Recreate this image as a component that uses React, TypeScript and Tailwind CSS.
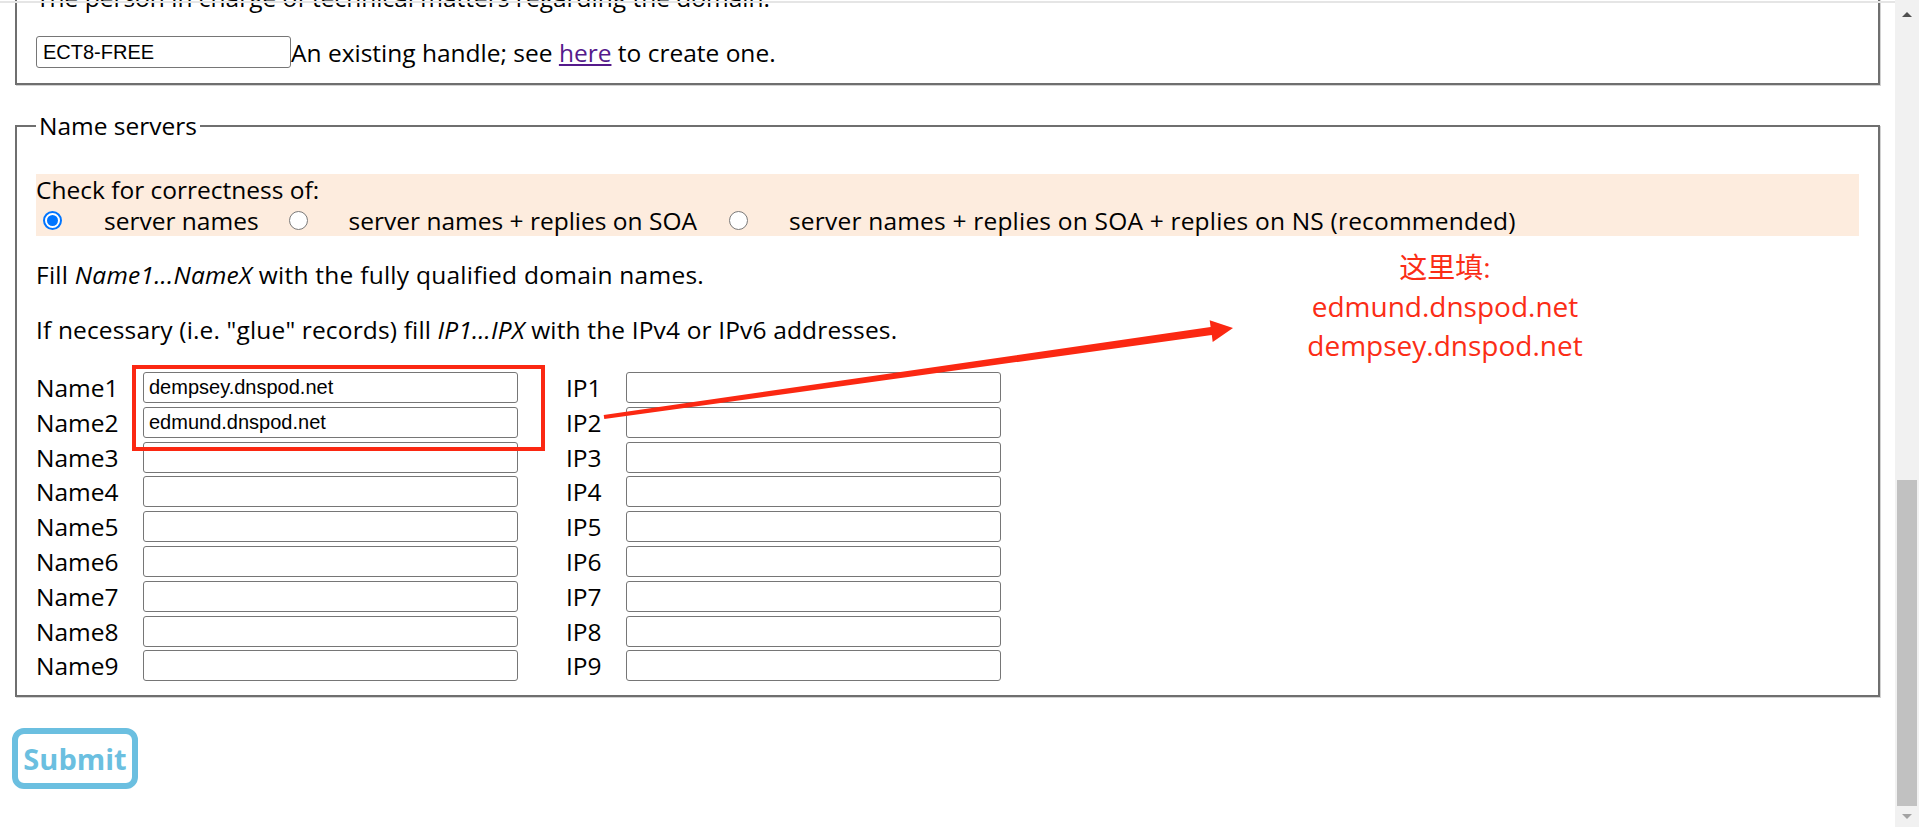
import React from "react";

const names = ["dempsey.dnspod.net", "edmund.dnspod.net", "", "", "", "", "", "", ""];

function Radio({ checked }: { checked?: boolean }) {
  if (checked) {
    return (
      <span className="w-[19px] h-[19px] shrink-0 rounded-full border-2 border-[#0075ff] bg-white flex items-center justify-center">
        <span className="block w-[11px] h-[11px] rounded-full bg-[#0075ff]" />
      </span>
    );
  }
  return <span className="block w-[19px] h-[19px] shrink-0 rounded-full border border-[#7a7a7a] bg-white" />;
}

function Field({ value }: { value?: string }) {
  return (
    <input
      readOnly
      value={value ?? ""}
      className="w-[375px] h-[31px] shrink-0 rounded-[3px] border border-[#767676] bg-white px-[5px] font-['Liberation_Sans',Arial,sans-serif] text-[20px] text-black outline-none"
    />
  );
}

export default function App() {
  return (
    <div className="relative w-[1919px] h-[827px] overflow-hidden bg-white flex font-['Open_Sans',sans-serif] text-[24.5px] leading-[31px] text-black">
      {/* page content, scrolled to the bottom */}
      <div className="flex-1 min-w-0 px-[12px]">
        {/* technical contact fieldset, its top is above the viewport */}
        <div className="-mt-[18px] mx-[3px] border-x-2 border-b-2 border-[#6f6f6f] shadow-[1px_1px_0_#d2d2d2] px-[19px] pb-[15px]">
          <p className="whitespace-nowrap">The person in charge of technical matters regarding the domain.</p>
          <div className="mt-[23px] h-[32px] flex items-center">
            <input
              readOnly
              value="ECT8-FREE"
              className="w-[255px] h-[32px] shrink-0 rounded-[3px] border border-[#767676] bg-white px-[6px] font-['Liberation_Sans',Arial,sans-serif] text-[20px] text-black outline-none"
            />
            <span className="whitespace-nowrap">
              An existing handle; see <a className="text-[#551a8b] underline">here</a> to create one.
            </span>
          </div>
        </div>

        {/* Name servers */}
        <fieldset className="mt-[25px] mx-[3px] border-2 border-solid border-[#6f6f6f] shadow-[1px_1px_0_#d2d2d2] px-[19px] pt-[33px] pb-[14px]">
          <legend className="px-[3px]">Name servers</legend>

          <div className="bg-[#fdecde]">
            <div>Check for correctness of:</div>
            <div className="flex items-center whitespace-nowrap">
              <span className="ml-[7px]">
                <Radio checked />
              </span>
              <span className="ml-[42px]">server names</span>
              <span className="ml-[30px]">
                <Radio />
              </span>
              <span className="ml-[41px]">server names + replies on SOA</span>
              <span className="ml-[32px]">
                <Radio />
              </span>
              <span className="ml-[41px] tracking-[0.2px]">server names + replies on SOA + replies on NS (recommended)</span>
            </div>
          </div>

          <p className="mt-[23px] tracking-[0.25px]">
            Fill <i>Name1...NameX</i> with the fully qualified domain names.
          </p>
          <p className="mt-[24px] tracking-[0.15px]">
            If necessary (i.e. "glue" records) fill <i>IP1...IPX</i> with the IPv4 or IPv6 addresses.
          </p>

          <div className="mt-[27px] flex flex-col gap-[3.8px]">
            {names.map((n, i) => (
              <div key={i} className="flex items-center h-[31px]">
                <span className="w-[107px] shrink-0">Name{i + 1}</span>
                <Field value={n} />
                <span className="ml-[48px] w-[60px] shrink-0">IP{i + 1}</span>
                <Field />
              </div>
            ))}
          </div>
        </fieldset>

        <button className="mt-[31px] w-[126px] h-[61px] flex items-center justify-center rounded-[12px] border-[6px] border-[#6bbfe0] bg-white font-['Open_Sans',sans-serif] font-bold text-[29px] leading-none text-[#6bbfe0]">
          Submit
        </button>
      </div>

      {/* scrollbar */}
      <div className="w-[24px] shrink-0 bg-[#f1f1f1] flex flex-col items-center">
        <div className="h-[17px] w-full flex items-end justify-center">
          <span className="w-0 h-0 border-x-[5px] border-x-transparent border-b-[5px] border-b-[#505050]" />
        </div>
        <div className="flex-1" />
        <div className="w-[20px] h-[326px] bg-[#c1c1c1]" />
        <div className="h-[21px] w-full flex items-start justify-center pt-[8px]">
          <span className="w-0 h-0 border-x-[5px] border-x-transparent border-t-[5px] border-t-[#a3a3a3]" />
        </div>
      </div>

      {/* browser edge line */}
      <div className="absolute left-0 top-[1px] w-[1895px] h-[2px] bg-[#e5e5e5]" />

      {/* red annotations */}
      <svg className="absolute left-0 top-0 pointer-events-none" width="1919" height="827" viewBox="0 0 1919 827">
        <rect x="134" y="367" width="409" height="82" fill="none" stroke="#fb2812" strokeWidth="4" />
        <polygon
          fill="#fb2812"
          points="603.7,415 1210.6,327.1 1209.7,320.2 1233,328 1212.7,342 1211.8,335.1 604.3,419"
        />
      </svg>
      <div className="absolute left-[1245px] top-[248px] w-[400px] text-center font-['Open_Sans','Noto_Sans_CJK_SC',sans-serif] text-[28px] leading-[39px] text-[#fb2d16]">
        <div>这里填:</div>
        <div>edmund.dnspod.net</div>
        <div>dempsey.dnspod.net</div>
      </div>
    </div>
  );
}
